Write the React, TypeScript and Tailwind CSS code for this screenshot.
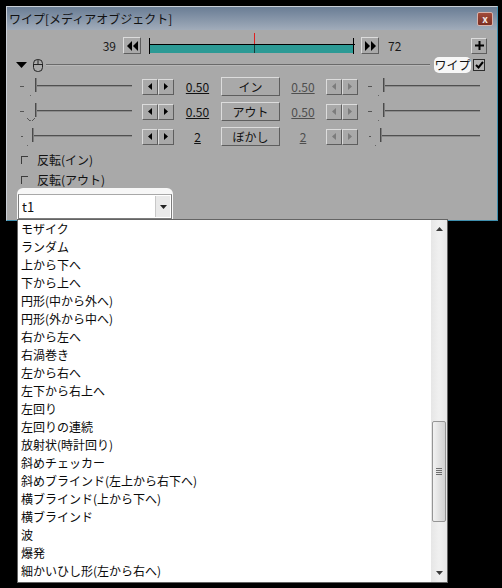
import React from "react";

const items = [
  "モザイク",
  "ランダム",
  "上から下へ",
  "下から上へ",
  "円形(中から外へ)",
  "円形(外から中へ)",
  "右から左へ",
  "右渦巻き",
  "左から右へ",
  "左下から右上へ",
  "左回り",
  "左回りの連続",
  "放射状(時計回り)",
  "斜めチェッカー",
  "斜めブラインド(左上から右下へ)",
  "横ブラインド(上から下へ)",
  "横ブラインド",
  "波",
  "爆発",
  "細かいひし形(左から右へ)",
];

const bevel =
  "border border-t-[#dcdcdc] border-l-[#dcdcdc] border-b-[#5e5e5e] border-r-[#5e5e5e]";

function Slider({ thumb, dot, pointer }: { thumb: number; dot?: boolean; pointer?: boolean }) {
  return (
    <svg width="118" height="19" className="shrink-0">
      {dot ? (
        <rect x="3" y="9" width="2" height="1" fill="#555" />
      ) : (
        <rect x="2" y="9" width="4" height="1" fill="#555" />
      )}
      <rect x={thumb} y="8" width={114 - thumb} height="1" fill="#505050" />
      <rect x={thumb} y="9" width={114 - thumb} height="1" fill="#8c8c8c" />
      <rect x={thumb} y="1" width="1" height="14" fill="#4a4a4a" />
      <rect x={thumb + 1} y="1" width="1" height="14" fill="#7e7e7e" />
      {pointer && (
        <polyline
          points={`${thumb - 8},16 ${thumb - 4},20 ${thumb},16`}
          fill="none"
          stroke="#555"
          strokeWidth="1"
        />
      )}
      <rect x={thumb - 5} y="18" width="1" height="1" fill="#666" />
    </svg>
  );
}

function ArrowPair({ disabled }: { disabled?: boolean }) {
  const c = disabled ? "#7c7c7c" : "#000";
  return (
    <div className="flex h-[16px] w-[32px] shrink-0">
      <div className={`w-[16px] h-[16px] flex items-center justify-center ${bevel}`}>
        <svg width="4" height="7">
          <polygon points="4,0 4,7 0,3.5" fill={c} />
        </svg>
      </div>
      <div className={`w-[16px] h-[16px] flex items-center justify-center ${bevel}`}>
        <svg width="4" height="7">
          <polygon points="0,0 0,7 4,3.5" fill={c} />
        </svg>
      </div>
    </div>
  );
}

function ParamRow({
  label,
  value,
  thumbL,
  thumbR,
  dot,
  pointer,
}: {
  label: string;
  value: string;
  thumbL: number;
  thumbR: number;
  dot?: boolean;
  pointer?: boolean;
}) {
  return (
    <div className="flex items-center h-[19px]">
      <div className="w-[11px] shrink-0" />
      <Slider thumb={thumbL} dot={dot} pointer={pointer} />
      <div className="w-[6px] shrink-0" />
      <ArrowPair />
      <div className="w-[47px] shrink-0 text-center underline text-[#111]">{value}</div>
      <div className={`w-[59px] h-[19px] shrink-0 flex items-center justify-center ${bevel}`}>
        {label}
      </div>
      <div className="w-[46px] shrink-0 text-center underline text-[#4e4e4e]">{value}</div>
      <ArrowPair disabled />
      <div className="w-[8px] shrink-0" />
      <Slider thumb={thumbR} dot={dot} />
    </div>
  );
}

export default function App() {
  return (
    <div className="relative w-[502px] h-[588px] bg-black overflow-hidden text-[12px] leading-none text-[#111] font-['Noto_Sans_CJK_JP','Noto_Sans',sans-serif]">
      <div className="pt-[6px] pl-[6px]">
        {/* window */}
        <div className="w-[492px] h-[215px] border border-[#c9ced6] border-r-[#3f8fae] border-b-[#3f8fae] bg-[#a9a9a9] flex flex-col">
          {/* title bar */}
          <div className="h-[23px] shrink-0 bg-linear-to-b from-[#6a7d95] to-[#a1acba] flex items-center justify-between pl-[2px] pr-[4px]">
            <span className="text-[12px] text-[#111]">ワイプ[メディアオブジェクト]</span>
            <div className="w-[16px] h-[14px] rounded-[2px] border border-[#d7b2aa] bg-linear-to-b from-[#a14a3a] to-[#7b2e22] flex items-center justify-center mt-[1px]">
              <span className="text-[10px] font-bold text-[#f2e6e3] leading-none -mt-[1px]">x</span>
            </div>
          </div>

          {/* body */}
          <div className="flex flex-col pt-[7px]">
            {/* frame row */}
            <div className="flex items-center h-[17px]">
              <div className="w-[110px] text-right pr-[1px] text-[#1a1a1a]">39</div>
              <div className="w-[6px]" />
              <div className={`w-[18px] h-[17px] flex items-center justify-center ${bevel}`}>
                <svg width="11" height="10">
                  <polygon points="5,0 5,10 0,5" fill="#000" />
                  <polygon points="11,0 11,10 6,5" fill="#000" />
                </svg>
              </div>
              <div className="w-[8px]" />
              <svg width="206" height="17" className="overflow-visible">
                <rect x="0" y="1" width="1" height="16" fill="#000" />
                <rect x="0" y="7" width="206" height="1" fill="#000" />
                <rect x="1" y="8" width="204" height="8" fill="#2c9a95" />
                <rect x="105" y="-4" width="1" height="11" fill="#e02020" />
                <rect x="105" y="8" width="1" height="8" fill="#1a3a38" />
                <rect x="204" y="1" width="1" height="16" fill="#000" />
              </svg>
              <div className="w-[6px]" />
              <div className={`w-[18px] h-[17px] flex items-center justify-center ${bevel}`}>
                <svg width="11" height="10">
                  <polygon points="0,0 0,10 5,5" fill="#000" />
                  <polygon points="6,0 6,10 11,5" fill="#000" />
                </svg>
              </div>
              <div className="w-[9px]" />
              <div className="w-[20px] text-[#1a1a1a]">72</div>
              <div className="flex-1" />
              <div className={`w-[16px] h-[16px] mr-[10px] flex items-center justify-center ${bevel}`}>
                <svg width="9" height="9">
                  <rect x="3.5" y="0" width="2" height="9" fill="#000" />
                  <rect x="0" y="3.5" width="9" height="2" fill="#000" />
                </svg>
              </div>
            </div>

            {/* filter header row */}
            <div className="flex items-center h-[16px] mt-[3px]">
              <div className="w-[9px]" />
              <svg width="11" height="7">
                <polygon points="0,0 11,0 5.5,6" fill="#000" />
              </svg>
              <div className="w-[6px]" />
              <svg width="10" height="13">
                <rect x="0.5" y="0.5" width="9" height="12" rx="4" fill="none" stroke="#222" />
                <line x1="5" y1="0.5" x2="5" y2="5" stroke="#222" />
                <line x1="0.5" y1="5.5" x2="9.5" y2="5.5" stroke="#222" />
              </svg>
              <div className="w-[3px]" />
              <div className="w-[384px] h-[2px] border-t border-[#6a6a6a] border-b-0 bg-[#b8b8b8]" />
              <div className="w-[4px]" />
              <div className="w-[37px] h-[16px] rounded-[5px] bg-[#f7f7f7] flex items-center justify-center text-[#111]">
                ワイプ
              </div>
              <div className="w-[2px]" />
              <div className="w-[12px] h-[12px] border border-[#2e2e2e] bg-[#b4b4b4] flex items-center justify-center">
                <svg width="9" height="8">
                  <polyline points="1,4 3.5,6.5 8,1" fill="none" stroke="#000" strokeWidth="2" />
                </svg>
              </div>
            </div>

            {/* parameter rows */}
            <div className="flex flex-col gap-[6px] mt-[4px]">
              <ParamRow label="イン" value="0.50" thumbL={17} thumbR={17} />
              <ParamRow label="アウト" value="0.50" thumbL={17} thumbR={17} pointer />
              <ParamRow label="ぼかし" value="2" thumbL={14} thumbR={14} dot />
            </div>

            {/* checkboxes */}
            <div className="flex items-center h-[18px] mt-[5px] pl-[14px]">
              <div className="w-[7px] h-[8px] border-t border-l border-[#3c3c3c]" />
              <span className="ml-[9px]">反転(イン)</span>
            </div>
            <div className="flex items-center h-[16px] mt-[3px] pl-[14px]">
              <div className="w-[7px] h-[8px] border-t border-l border-[#3c3c3c]" />
              <span className="ml-[9px]">反転(アウト)</span>
            </div>

            {/* combo */}
            <div className="ml-[10px] w-[156px] h-[31px] rounded-t-[6px] bg-[#f7f7f7] pt-[6px] px-[1px]">
              <div className="h-[25px] border border-[#7d7d7d] border-t-[#a8a8a8] bg-white flex items-center">
                <span className="pl-[3px] flex-1 text-[13px]">t1</span>
                <div className="w-[15px] h-[21px] mr-[1px] bg-[#e9e9e9] border-l border-[#c8c8c8] flex items-center justify-center">
                  <svg width="7" height="4">
                    <polygon points="0,0 7,0 3.5,4" fill="#222" />
                  </svg>
                </div>
              </div>
            </div>
          </div>
        </div>
      </div>

      {/* dropdown list */}
      <div className="absolute left-[17px] top-[219px] w-[431px] h-[364px] border border-[#646464] bg-white flex">
        <div className="flex-1 flex flex-col">
          {items.map((t) => (
            <div key={t} className="h-[18px] flex items-center pl-[3px] text-[12px] text-[#0a0a0a]">
              {t}
            </div>
          ))}
        </div>
        <div className="w-[16px] bg-linear-to-r from-[#e6e6e6] via-[#f0f0f0] to-[#e6e6e6] flex flex-col">
          <div className="h-[18px] flex items-center justify-center">
            <svg width="7" height="4">
              <polygon points="3.5,0 7,4 0,4" fill="#3a3a3a" />
            </svg>
          </div>
          <div className="flex-1">
            <div className="mt-[183px] mx-[1px] h-[101px] rounded-[2px] border border-[#959595] bg-linear-to-r from-[#f2f2f2] to-[#d2d2d2] flex flex-col items-center justify-center gap-[1px]">
              <div className="w-[6px] h-[1px] bg-[#6e6e6e]" />
              <div className="w-[6px] h-[1px] bg-[#6e6e6e]" />
              <div className="w-[6px] h-[1px] bg-[#6e6e6e]" />
              <div className="w-[6px] h-[1px] bg-[#6e6e6e]" />
            </div>
          </div>
          <div className="h-[18px] flex items-center justify-center">
            <svg width="7" height="4">
              <polygon points="0,0 7,0 3.5,4" fill="#3a3a3a" />
            </svg>
          </div>
        </div>
      </div>
    </div>
  );
}
